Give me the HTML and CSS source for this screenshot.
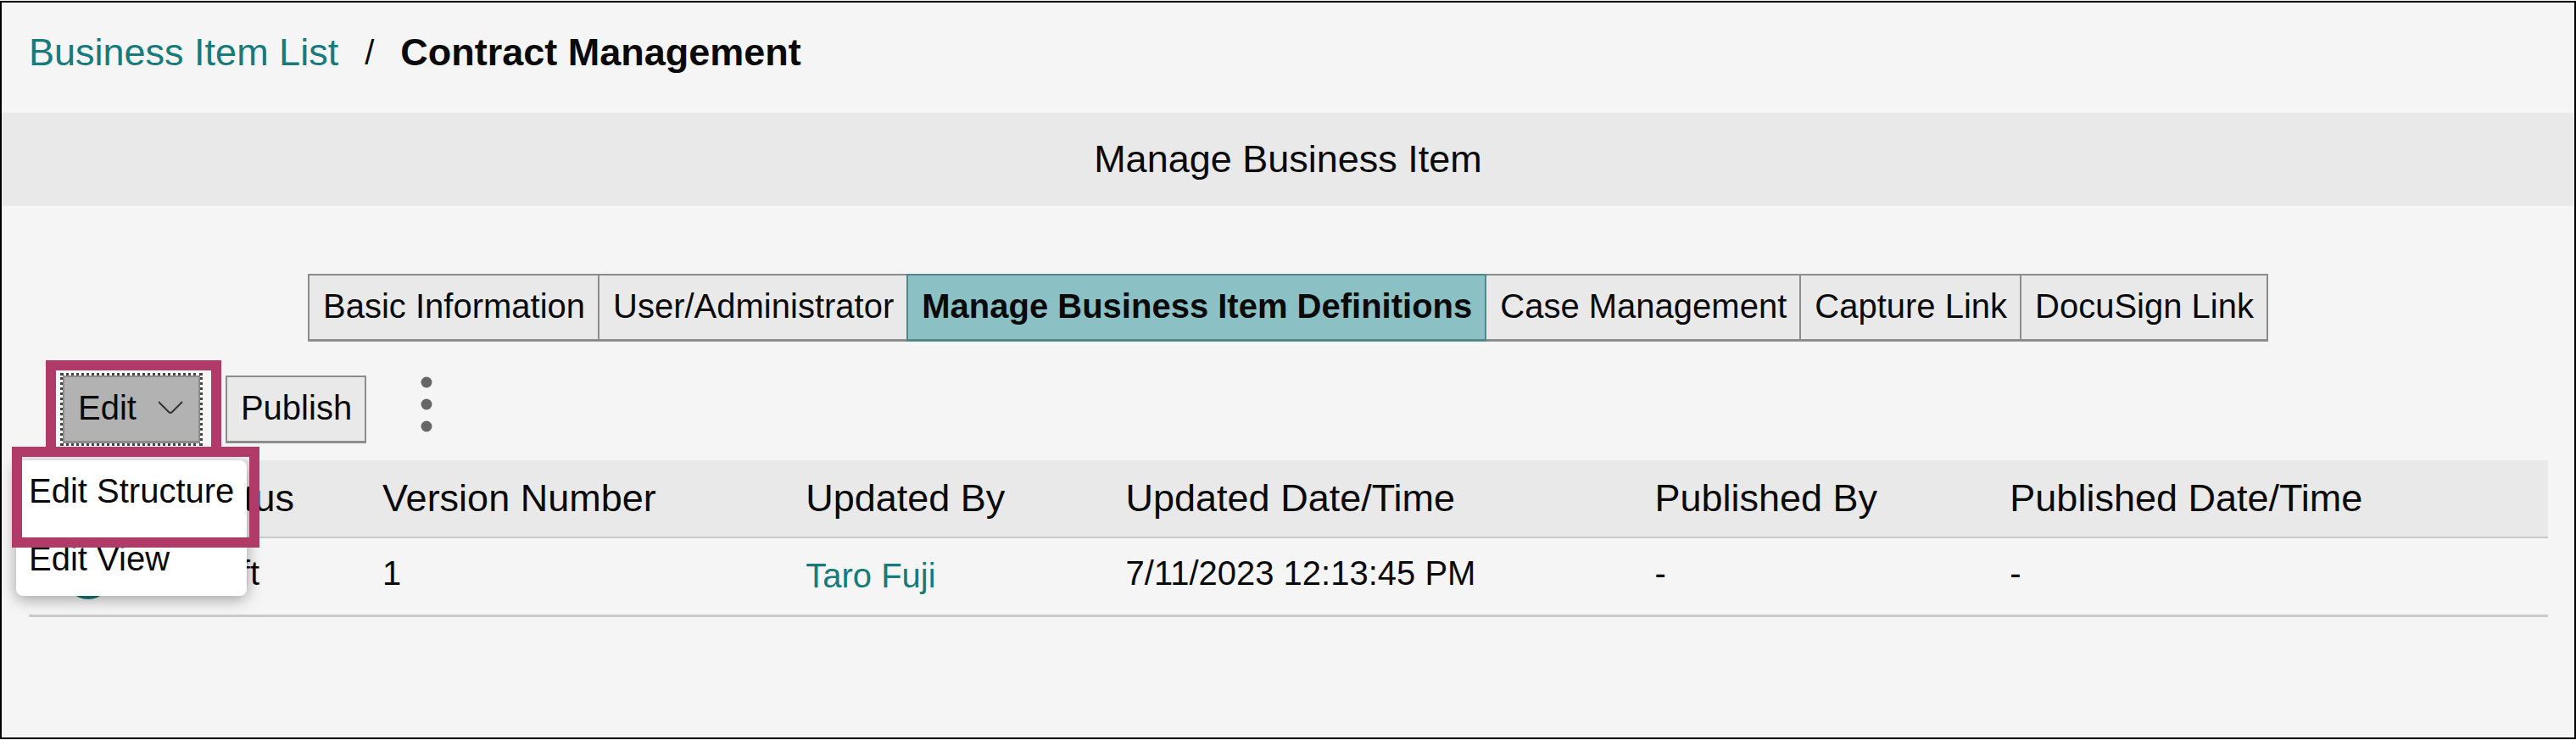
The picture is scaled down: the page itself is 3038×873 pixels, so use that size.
FILE: index.html
```html
<!DOCTYPE html>
<html lang="en">
<head>
<meta charset="utf-8">
<title>Contract Management</title>
<link rel="stylesheet" href="styles.css">
</head>
<body>
<div class="frame">
  <nav class="breadcrumb" aria-label="Breadcrumb">
    <a class="link" href="#list">Business Item List</a>
    <span class="separator">/</span>
    <strong>Contract Management</strong>
  </nav>
  <h1 class="title-bar">Manage Business Item</h1>
  <div class="tabs">
    <button class="tab" type="button">Basic Information</button>
    <button class="tab" type="button">User/Administrator</button>
    <button class="tab tab-active" type="button">Manage Business Item Definitions</button>
    <button class="tab" type="button">Case Management</button>
    <button class="tab" type="button">Capture Link</button>
    <button class="tab" type="button">DocuSign Link</button>
  </div>
  <div class="toolbar">
    <div class="dropdown">
      <button class="button button-open" type="button" aria-expanded="true">Edit
        <svg class="chevron" width="32" height="20" viewBox="0 0 32 20" aria-hidden="true"><path d="M0 3 L12 15 Q14 17 16 15 L28 3" fill="none" stroke="#333" stroke-width="2"/></svg>
      </button>
      <div class="menu">
        <button class="menu-item" type="button">Edit Structure</button>
        <button class="menu-item" type="button">Edit View</button>
      </div>
      <span class="highlight highlight-button"></span>
      <span class="highlight highlight-item"></span>
    </div>
    <button class="button" type="button">Publish</button>
    <button class="more" type="button" aria-label="More actions">
      <svg width="14" height="68" viewBox="0 0 14 68" fill="#666" aria-hidden="true"><circle cx="7" cy="8" r="6.5"/><circle cx="7" cy="34" r="6.5"/><circle cx="7" cy="60" r="6.5"/></svg>
    </button>
  </div>
  <table class="definitions">
    <colgroup>
      <col class="col-select"><col class="col-status"><col class="col-version"><col class="col-updater"><col class="col-updated"><col class="col-publisher"><col>
    </colgroup>
    <thead>
      <tr><th></th><th>Status</th><th>Version Number</th><th>Updated By</th><th>Updated Date/Time</th><th>Published By</th><th>Published Date/Time</th></tr>
    </thead>
    <tbody>
      <tr>
        <td class="cell-control"><input class="radio" type="radio" name="definition" aria-label="Version 1" checked></td>
        <td>Draft</td>
        <td>1</td>
        <td class="cell-control"><a class="link" href="#user">Taro Fuji</a></td>
        <td>7/11/2023 12:13:45 PM</td>
        <td>-</td>
        <td>-</td>
      </tr>
    </tbody>
  </table>
</div>
</body>
</html>
```
FILE: styles.css
```css
* {
  box-sizing: border-box;
}

body {
  margin: 0;
  padding: 1px 0;
  background: #f5f5f5;
  color: #0a0a0a;
  font-family: "Liberation Sans", Arial, sans-serif;
  font-size: 40px;
}

button {
  margin: 0;
  color: inherit;
  font: inherit;
  white-space: nowrap;
}

.frame {
  min-height: calc(100vh - 2px);
  border: 2px solid #000;
}

.link {
  color: #177a7b;
  text-decoration: none;
}

.breadcrumb {
  display: flex;
  align-items: center;
  gap: 31px;
  padding: 35px 32px 47px;
  font-size: 45px;
  line-height: 48px;
}

.separator {
  font-size: 40px;
}

.title-bar {
  margin: 0;
  background: #e9e9e9;
  font-size: 45px;
  font-weight: 400;
  line-height: 110px;
  text-align: center;
}

.tabs {
  display: flex;
  justify-content: center;
  margin: 80px 0 40px;
}

.tab,
.button {
  padding: 0 15px 3px 16px;
  border: 2px solid #8c8c8c;
  border-bottom-width: 3px;
  background: #e9e9e9;
  line-height: 72px;
}

.tab + .tab {
  margin-left: -2px;
}

.tab-active {
  position: relative;
  border-color: #558789;
  background: #8bc0c4;
  font-weight: 700;
}

.toolbar {
  display: flex;
  gap: 30px;
  margin: 0 72px 20px;
}

.dropdown {
  position: relative;
}

.button-open {
  display: flex;
  align-items: center;
  gap: 26px;
  background: #b2b2b2;
  outline: 3px dotted #444;
}

.menu {
  position: absolute;
  top: 100px;
  left: -55px;
  z-index: 1;
  display: flex;
  flex-direction: column;
  width: 272px;
  border-radius: 8px;
  background: #fff;
  box-shadow: 0 4px 18px rgba(0, 0, 0, 0.35);
}

.menu-item {
  padding: 0 15px 8px;
  border: 0;
  background: none;
  line-height: 72px;
  text-align: left;
}

.highlight {
  position: absolute;
  z-index: 2;
  border: 12px solid #b03a68;
  pointer-events: none;
}

.highlight-button {
  top: -18px;
  left: -20px;
  width: 207px;
  height: 114px;
}

.highlight-item {
  top: 84px;
  left: -60px;
  width: 292px;
  height: 119px;
}

.more {
  display: flex;
  align-items: center;
  justify-content: center;
  width: 82px;
  padding: 0 0 12px;
  border: 0;
  background: none;
}

.definitions {
  width: calc(100% - 63px);
  margin-left: 32px;
  border-collapse: separate;
  border-spacing: 0;
  table-layout: fixed;
}

.definitions th {
  height: 92px;
  padding: 0 0 0 16px;
  border-bottom: 2px solid #cacaca;
  background: #e9e9e9;
  font-size: 45px;
  font-weight: 400;
  text-align: left;
}

.definitions td {
  height: 93px;
  padding: 0 0 8px 16px;
  border-bottom: 3px solid #cacaca;
}

.definitions .cell-control {
  padding-bottom: 2px;
}

.col-select {
  width: 5.7%;
}

.col-status {
  width: 7.8%;
}

.col-version {
  width: 16.8%;
}

.col-updater {
  width: 12.7%;
}

.col-updated {
  width: 21%;
}

.col-publisher {
  width: 14.1%;
}

.radio {
  display: block;
  width: 56px;
  height: 56px;
  margin: 0 0 0 26px;
  border: 4px solid #177a7b;
  border-radius: 50%;
  appearance: none;
  background: radial-gradient(circle, #177a7b 50%, #f5f5f5 54%);
}
```
